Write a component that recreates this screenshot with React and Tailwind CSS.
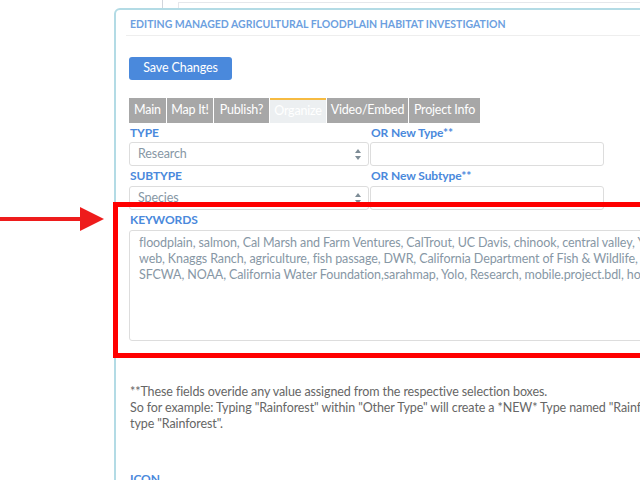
const Label = ({ children, h }) => (
  <div className={`flex items-center pl-px text-[12px] font-bold text-[#4a89dc] tracking-[-0.1px] whitespace-nowrap ${h}`}>{children}</div>
);

function Select({ value }) {
  return (
    <div className="relative h-[24px] border border-[#dddddd] rounded-[3px] mr-px pl-[8px] flex items-center text-[12.5px] tracking-[-0.1px] text-[#8797a5]">
      {value}
      <svg className="absolute right-[7px] top-[6px]" width="6" height="11" viewBox="0 0 6 11">
        <polygon points="3,0 6,4 0,4" fill="#7d8c96" />
        <polygon points="0,7 6,7 3,11" fill="#7d8c96" />
      </svg>
    </div>
  );
}

export default function App() {
  const font = { fontFamily: '"Source Sans Pro", Lato, "Noto Sans", sans-serif' };
  return (
    <div className="relative w-[640px] h-[480px] overflow-hidden bg-white" style={font}>
      {/* background window behind */}
      <div className="absolute left-[162px] top-0 w-[500px] h-[10px] border-l border-gray-300"></div>
      <div className="absolute left-[178px] top-[2px] w-[500px] h-[10px] border-l border-t border-gray-200"></div>

      {/* modal */}
      <div className="relative ml-[114px] mt-[8px] w-[620px] h-[700px] bg-white border-2 border-[#b3dbe5] rounded-tl-[6px]">
        <div className="mx-[10px] h-[26px] border-b border-[#eeeeee] pl-[4px] pt-[8px] leading-[12px] text-[10.5px] font-bold text-[#6d9fe0] whitespace-nowrap">
          EDITING MANAGED AGRICULTURAL FLOODPLAIN HABITAT INVESTIGATION
        </div>
        <div className="pl-[13px] pt-[21px]">
          <div className="flex items-center justify-center h-[23px] w-[103px] rounded-[3px] bg-[#4a89dc] text-white text-[12.5px] tracking-[-0.1px]">Save Changes</div>
          <div className="flex mt-[18px] h-[25px] text-[12.5px] tracking-[-0.2px] text-white">
            <div className="w-[37px] flex items-center justify-center bg-[#a7a7a7] mr-px">Main</div>
            <div className="w-[46px] flex items-center justify-center bg-[#a7a7a7] mr-px">Map It!</div>
            <div className="w-[55px] flex items-center justify-center bg-[#a7a7a7] mr-px">Publish?</div>
            <div className="w-[56px] flex items-center justify-center bg-[#eceff1] mr-px border-t-2 border-[#f6bb42]">Organize</div>
            <div className="w-[81px] flex items-center justify-center bg-[#a7a7a7] mr-px">Video/Embed</div>
            <div className="w-[71px] flex items-center justify-center bg-[#a7a7a7]">Project Info</div>
          </div>
          <div className="flex">
            <div className="w-[241px]">
              <Label h="h-[19px]">TYPE</Label>
              <Select value="Research" />
              <Label h="h-[20px]">SUBTYPE</Label>
              <Select value="Species" />
            </div>
            <div className="w-[234px]">
              <Label h="h-[19px]">OR New Type**</Label>
              <div className="h-[24px] border border-[#dddddd] rounded-[3px]"></div>
              <Label h="h-[20px]">OR New Subtype**</Label>
              <div className="h-[24px] border border-[#dddddd] rounded-[3px]"></div>
            </div>
          </div>
          <Label h="h-[20px]">KEYWORDS</Label>
          <div className="h-[111px] w-[560px] border border-[#dddddd] rounded-[3px] px-[9px] pt-[4px] text-[12.5px] tracking-[-0.1px] leading-[16px] text-[#8797a5] whitespace-nowrap overflow-hidden">
            <div>floodplain, salmon, Cal Marsh and Farm Ventures, CalTrout, UC Davis, chinook, central valley, Yolo Bypass, food</div>
            <div>web, Knaggs Ranch, agriculture, fish passage, DWR, California Department of Fish &amp; Wildlife, U.S. Fish</div>
            <div>SFCWA, NOAA, California Water Foundation,sarahmap, Yolo, Research, mobile.project.bdl, home</div>
          </div>
          <div className="mt-[43px] text-[12.5px] tracking-[-0.1px] leading-[16px] text-[#666666] whitespace-nowrap pl-px">
            <div>**These fields overide any value assigned from the respective selection boxes.</div>
            <div>So for example: Typing "Rainforest" within "Other Type" will create a *NEW* Type named "Rainforest" and assign</div>
            <div>type "Rainforest".</div>
          </div>
          <div className="mt-[39px]">
            <Label h="h-[16px]">ICON</Label>
          </div>
        </div>
      </div>

      {/* annotation red box */}
      <div className="absolute left-[113px] top-[202px] w-[560px] h-[156px] border-[5px] border-[#ff0000]"></div>
      {/* red arrow */}
      <svg className="absolute left-0 top-[205px]" width="106" height="28" viewBox="0 0 106 28">
        <rect x="0" y="12" width="82" height="4" fill="#ee1c1c" />
        <polygon points="80,2 104,14 80,26" fill="#ee1c1c" />
      </svg>
    </div>
  );
}
